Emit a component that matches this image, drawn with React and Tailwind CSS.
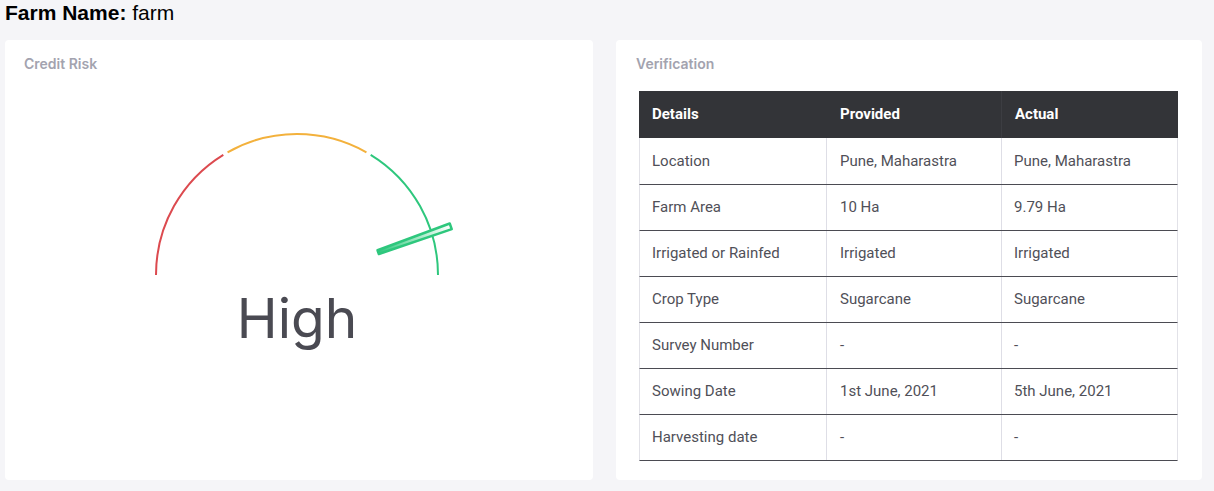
import React from "react";

const rows = [
  ["Location", "Pune, Maharastra", "Pune, Maharastra"],
  ["Farm Area", "10 Ha", "9.79 Ha"],
  ["Irrigated or Rainfed", "Irrigated", "Irrigated"],
  ["Crop Type", "Sugarcane", "Sugarcane"],
  ["Survey Number", "-", "-"],
  ["Sowing Date", "1st June, 2021", "5th June, 2021"],
  ["Harvesting date", "-", "-"],
];

const CX = 292;
const CY = 191;
const R = 141;

const pt = (deg, r = R) => {
  const a = (deg * Math.PI) / 180;
  return [CX + r * Math.cos(a), CY - r * Math.sin(a)];
};

const arc = (from, to) => {
  const [x1, y1] = pt(from);
  const [x2, y2] = pt(to);
  return `M ${x1} ${y1} A ${R} ${R} 0 0 1 ${x2} ${y2}`;
};

// needle is a thin tapered bar, pushed a little off the hub like the original
const needlePts = (deg) => {
  const a = (deg * Math.PI) / 180;
  const nx = -Math.sin(a);
  const ny = -Math.cos(a);
  const [bx0, by0] = pt(deg, 83);
  const [tx0, ty0] = pt(deg, 160);
  const bx = bx0 + 3, by = by0 + 5, tx = tx0 + 3, ty = ty0 + 5;
  const p = (x, y, w, s) => `${x + nx * w * s},${y + ny * w * s}`;
  return {
    points: [p(bx, by, 2, 1), p(tx, ty, 3, 1), p(tx, ty, 3, -1), p(bx, by, 2, -1)].join(" "),
    bx, by, tx, ty,
  };
};

const Gauge = () => {
  const n = needlePts(19.6);
  return (
    <svg width="588" height="195" viewBox="0 0 588 195" className="block">
      <defs>
        <linearGradient id="ng" gradientUnits="userSpaceOnUse" x1={n.bx} y1={n.by} x2={n.tx} y2={n.ty}>
          <stop offset="0" stopColor="#2ec77d" />
          <stop offset="0.45" stopColor="#8fe3b8" />
          <stop offset="1" stopColor="#ffffff" />
        </linearGradient>
      </defs>
      <path d={arc(180, 121.5)} fill="none" stroke="#dc4a4f" strokeWidth="2" />
      <path d={arc(119.5, 60.5)} fill="none" stroke="#f3b13c" strokeWidth="2" />
      <path d={arc(58.5, 0)} fill="none" stroke="#2ec77d" strokeWidth="2" />
      <polygon
        points={n.points}
        fill="url(#ng)"
        stroke="#2ec77d"
        strokeWidth="2.5"
        strokeLinejoin="round"
      />
    </svg>
  );
};

const App = () => {
  return (
    <div className="w-[1214px] h-[491px] bg-[#f5f5f8] overflow-hidden">
      <h1
        className="pl-[5px] pt-[1px] h-[40px] text-[21px] leading-[24px] text-black"
        style={{ fontFamily: '"Liberation Sans", Arial, sans-serif' }}
      >
        <span className="font-bold">Farm Name:</span> farm
      </h1>

      <div className="flex gap-[23px] pl-[5px]">
        <div className="w-[588px] h-[440px] bg-white rounded-[4px] font-['Inter',sans-serif]">
          <div className="pl-[19px] pt-[13px] text-[14px] font-semibold text-[#a3a3af]">
            Credit Risk
          </div>
          <div className="mt-[10px]">
            <Gauge />
          </div>
          <div className="mt-[12px] text-center text-[55px] leading-[55px] font-normal text-[#4a4a52] pr-[4px]">
            High
          </div>
        </div>

        <div className="w-[586px] h-[440px] bg-white rounded-[4px]">
          <div className="pl-[20px] pt-[13px] text-[14px] font-semibold text-[#a3a3af] font-['Inter',sans-serif]">
            Verification
          </div>
          <div className="ml-[23px] mt-[17px] w-[539px] font-['Roboto',sans-serif] text-[15px]">
            <div className="flex h-[47px] bg-[#333438] text-white font-bold items-center">
              <div className="w-[188px] pl-[13px]">Details</div>
              <div className="w-[175px] pl-[13px] h-full flex items-center border-r border-[#3c3d42]">Provided</div>
              <div className="w-[176px] pl-[13px]">Actual</div>
            </div>
            {rows.map((r, i) => (
              <div
                key={i}
                className={`flex border-b border-[#4b4b52] border-l border-r border-l-[#e2e2e8] border-r-[#e2e2e8] text-[#505058] ${
                  i === 0 ? "h-[47px]" : "h-[46px]"
                }`}
              >
                <div className="w-[187px] pl-[12px] flex items-center border-r border-[#dedee6]">{r[0]}</div>
                <div className="w-[175px] pl-[13px] flex items-center border-r border-[#dedee6]">{r[1]}</div>
                <div className="flex-1 pl-[12px] flex items-center">{r[2]}</div>
              </div>
            ))}
          </div>
        </div>
      </div>
    </div>
  );
};

export default App;
